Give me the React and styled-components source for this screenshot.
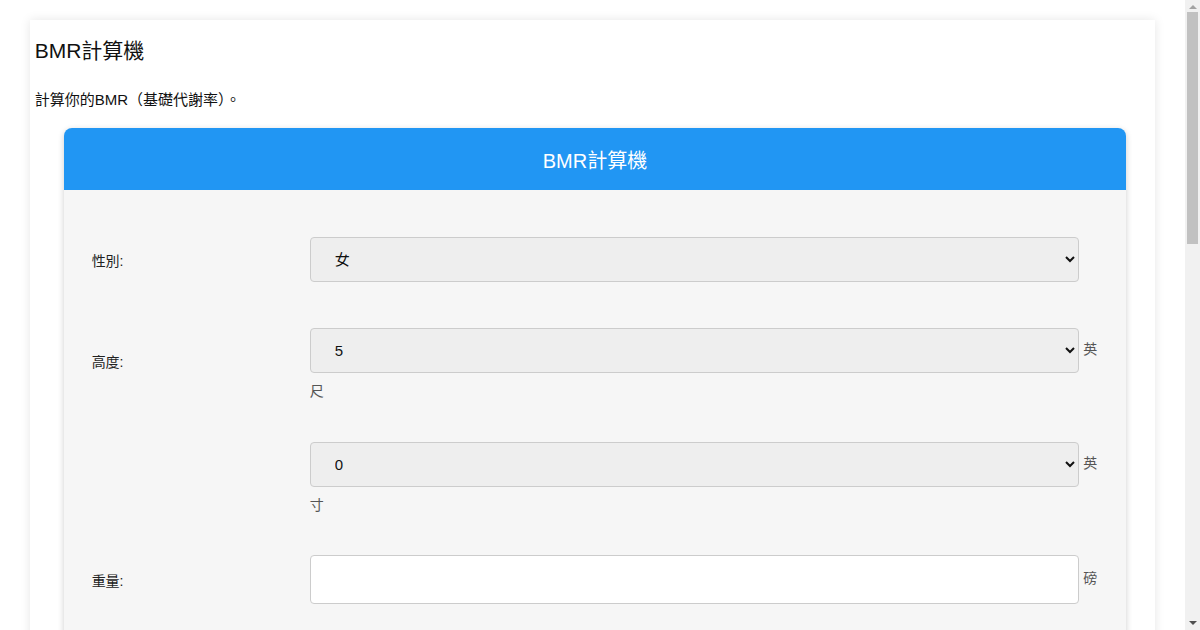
import React, { useState } from 'react';
import styled, { createGlobalStyle } from 'styled-components';

const GlobalStyle = createGlobalStyle`
  html, body {
    margin: 0;
    padding: 0;
    background: #fff;
    font-family: "Liberation Sans", Arial, "Noto Sans CJK TC", sans-serif;
    color: #111;
  }

  body {
    padding-right: 15px;
  }
`;

// classic scrollbar strip on the right side of the window
const ScrollTrack = styled.div`
  position: fixed;
  top: 0;
  right: 0;
  width: 15px;
  height: 100vh;
  background: #f1f1f1;
  z-index: 10;
`;

const ScrollThumb = styled.div`
  position: absolute;
  top: 12px;
  left: 2px;
  width: 11px;
  height: 232px;
  background: #c1c1c1;
`;

const ScrollArrow = styled.div`
  position: absolute;
  left: 4px;
  width: 0;
  height: 0;
  border-left: 4px solid transparent;
  border-right: 4px solid transparent;
  ${(p) =>
    p.$down
      ? 'bottom: 5px; border-top: 4px solid #505050;'
      : 'top: 5px; border-bottom: 4px solid #a3a3a3;'}
`;

const Page = styled.div`
  width: 95%;
  margin: 20px auto;
  padding: 5px;
  box-sizing: border-box;
  background: #fff;
  box-shadow: 0 0 10px rgba(0, 0, 0, 0.1);
`;

const Title = styled.h1`
  margin: 14px 0 27px;
  font-size: 21px;
  font-weight: normal;
  line-height: 24px;
`;

const Intro = styled.p`
  margin: 0 0 18px;
  font-size: 15px;
  line-height: 20px;
`;

const Calculator = styled.div`
  margin: 0 24px 40px 29px;
  border-radius: 8px;
  background: #f6f6f6;
  box-shadow: 0 2px 6px rgba(0, 0, 0, 0.2);
  overflow: hidden;
`;

const Header = styled.div`
  height: 62px;
  display: flex;
  align-items: center;
  justify-content: center;
  background: #2196f3;
  color: #fff;
  font-size: 20px;
`;

const Body = styled.div`
  padding: 24px 28px 30px;
`;

const Row = styled.div`
  display: flex;
  align-items: center;
  padding: ${(p) => p.$pad || '23px 0'};
`;

const Label = styled.div`
  width: 218px;
  flex-shrink: 0;
  font-size: 14px;
  color: #222;
  margin-top: ${(p) => (p.$lift ? '-3px' : '0')};
`;

const Field = styled.div`
  flex: 1;
  font-size: 14px;
  line-height: 36px;
  color: #555;
  margin-bottom: ${(p) => (p.$wrapped ? '-13px' : '0')};
`;

const Select = styled.select`
  width: calc(100% - 19px);
  height: 45px;
  padding: 0 20px;
  box-sizing: border-box;
  vertical-align: middle;
  background: #eee;
  border: 1px solid #ccc;
  border-radius: 4px;
  font-family: inherit;
  font-size: 15px;
  color: #111;
`;

const Input = styled.input`
  width: calc(100% - 19px);
  height: 49px;
  padding: 0 20px;
  box-sizing: border-box;
  vertical-align: middle;
  background: #fff;
  border: 1px solid #ccc;
  border-radius: 4px;
  font-family: inherit;
  font-size: 15px;
`;

const Button = styled.button`
  padding: 14px 40px;
  border: none;
  border-radius: 4px;
  background: #2196f3;
  color: #fff;
  font-family: inherit;
  font-size: 16px;
  line-height: 20px;
  cursor: pointer;
`;

const Result = styled.div`
  margin-top: 20px;
  font-size: 16px;
  color: #222;
`;

const Section = styled.div`
  padding: 0 0 20px;
  font-size: 14px;
  line-height: 22px;

  h2 {
    margin: 20px 0 10px;
    font-size: 18px;
    font-weight: normal;
  }

  p {
    margin: 0 0 12px;
  }
`;

const range = (a, b) => Array.from({ length: b - a + 1 }, (_, i) => a + i);

export default function App() {
  const [sex, setSex] = useState('female');
  const [feet, setFeet] = useState('5');
  const [inches, setInches] = useState('0');
  const [weight, setWeight] = useState('');
  const [age, setAge] = useState('');
  const [bmr, setBmr] = useState(null);

  const calc = () => {
    const cm = (Number(feet) * 12 + Number(inches)) * 2.54;
    const kg = Number(weight) * 0.4536;
    const base = 10 * kg + 6.25 * cm - 5 * Number(age);
    setBmr(Math.round(sex === 'male' ? base + 5 : base - 161));
  };

  return (
    <>
      <GlobalStyle />
      <ScrollTrack>
        <ScrollArrow />
        <ScrollThumb />
        <ScrollArrow $down />
      </ScrollTrack>
      <Page>
        <Title>BMR計算機</Title>
        <Intro>計算你的BMR（基礎代謝率）。</Intro>
        <Calculator>
          <Header>BMR計算機</Header>
          <Body>
            <Row>
              <Label>性別:</Label>
              <Field>
                <Select value={sex} onChange={(e) => setSex(e.target.value)}>
                  <option value="female">女</option>
                  <option value="male">男</option>
                </Select>
              </Field>
            </Row>
            <Row>
              <Label $lift>高度:</Label>
              <Field $wrapped>
                <Select value={feet} onChange={(e) => setFeet(e.target.value)}>
                  {range(3, 8).map((n) => (
                    <option key={n} value={n}>{n}</option>
                  ))}
                </Select>{' '}
                英尺
              </Field>
            </Row>
            <Row>
              <Label />
              <Field $wrapped>
                <Select value={inches} onChange={(e) => setInches(e.target.value)}>
                  {range(0, 11).map((n) => (
                    <option key={n} value={n}>{n}</option>
                  ))}
                </Select>{' '}
                英寸
              </Field>
            </Row>
            <Row $pad="22px 0 23px">
              <Label>重量:</Label>
              <Field>
                <Input value={weight} onChange={(e) => setWeight(e.target.value)} />{' '}
                磅
              </Field>
            </Row>
            <Row>
              <Label>年齡:</Label>
              <Field>
                <Input value={age} onChange={(e) => setAge(e.target.value)} />{' '}
                歲
              </Field>
            </Row>
            <Row $pad="23px 0 0">
              <Label />
              <Field>
                <Button onClick={calc}>計算BMR</Button>
                {bmr !== null && <Result>你的BMR：{bmr} 卡路里/天</Result>}
              </Field>
            </Row>
          </Body>
        </Calculator>
        <Section>
          <h2>什麼是BMR？</h2>
          <p>基礎代謝率（BMR）是指身體在完全休息狀態下，維持呼吸、血液循環、體溫等基本生理功能所需消耗的熱量。</p>
          <p>了解自己的BMR，可以幫助你規劃每日飲食攝取量，無論是減重、增肌或維持體重都很有幫助。</p>
          <h2>BMR公式</h2>
          <p>男性：BMR = 10 × 體重(公斤) + 6.25 × 身高(公分) − 5 × 年齡 + 5</p>
          <p>女性：BMR = 10 × 體重(公斤) + 6.25 × 身高(公分) − 5 × 年齡 − 161</p>
          <h2>影響BMR的因素</h2>
          <p>年齡、性別、身高、體重、肌肉量及荷爾蒙等都會影響基礎代謝率。一般來說，肌肉量越多，BMR越高。</p>
          <p>隨著年齡增長，BMR會逐漸下降，因此維持規律運動有助於保持代謝。</p>
        </Section>
      </Page>
    </>
  );
}
